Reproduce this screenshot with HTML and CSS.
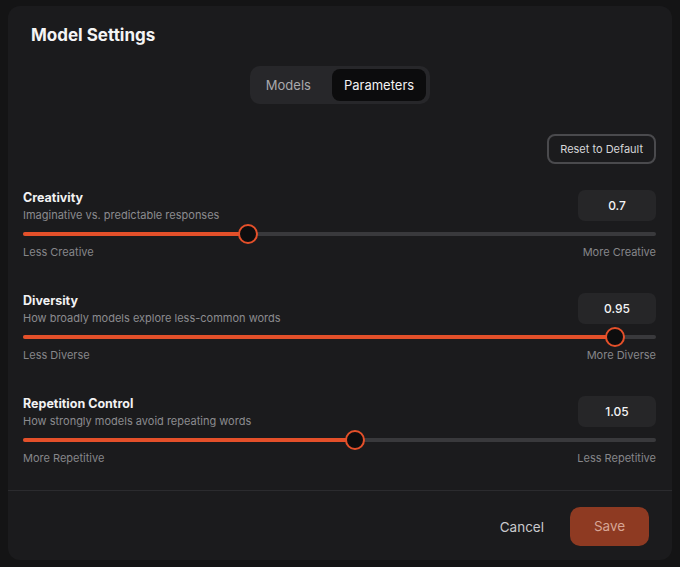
FILE: index.html
```html
<!DOCTYPE html>
<html lang="en">
<head>
    <meta charset="UTF-8">
    <meta name="viewport" content="width=device-width, initial-scale=1.0">
    <title>Model Settings</title>

    <link rel="stylesheet" href="styles.css">
</head>
<body>
    <div class="dialog">
        <h2 class="dialog-title">Model Settings</h2>

        <div class="tabs">
            <a href="#models" class="tab">Models</a>
            <a href="#parameters" class="tab active">Parameters</a>
        </div>

        <div class="params">
            <div class="reset-row">
                <a href="#reset" class="btn-reset">Reset to Default</a>
            </div>

            <div class="param">
                <div class="param-head">
                    <div>
                        <div class="param-name">Creativity</div>
                        <div class="param-desc">Imaginative vs. predictable responses</div>
                    </div>
                    <div class="param-value">0.7</div>
                </div>
                <div class="slider" style="--p: 0.35">
                    <div class="slider-fill"></div>
                    <div class="slider-thumb"></div>
                </div>
                <div class="slider-labels">
                    <span>Less Creative</span>
                    <span>More Creative</span>
                </div>
            </div>

            <div class="param">
                <div class="param-head">
                    <div>
                        <div class="param-name">Diversity</div>
                        <div class="param-desc">How broadly models explore less-common words</div>
                    </div>
                    <div class="param-value">0.95</div>
                </div>
                <div class="slider" style="--p: 0.95">
                    <div class="slider-fill"></div>
                    <div class="slider-thumb"></div>
                </div>
                <div class="slider-labels">
                    <span>Less Diverse</span>
                    <span>More Diverse</span>
                </div>
            </div>

            <div class="param">
                <div class="param-head">
                    <div>
                        <div class="param-name">Repetition Control</div>
                        <div class="param-desc">How strongly models avoid repeating words</div>
                    </div>
                    <div class="param-value">1.05</div>
                </div>
                <div class="slider" style="--p: 0.525">
                    <div class="slider-fill"></div>
                    <div class="slider-thumb"></div>
                </div>
                <div class="slider-labels">
                    <span>More Repetitive</span>
                    <span>Less Repetitive</span>
                </div>
            </div>
        </div>

        <div class="dialog-footer">
            <a href="#cancel" class="btn-cancel">Cancel</a>
            <a href="#save" class="btn-save">Save</a>
        </div>
    </div>
</body>
</html>
```

FILE: styles.css
```css
*{
    box-sizing: border-box;
}
body{
    margin: 0;
    height: 567px;
    overflow: hidden;
    background-color: #141415;
    font-family: "Inter", "Lato", sans-serif;
    color: #ededee;
}
a{
    text-decoration: none;
}

.dialog{
    width: 664px;
    height: 554px;
    margin: 6px 0 0 8px;
    background-color: #1b1b1d;
    border-radius: 12px;
    display: flex;
    flex-direction: column;
}
.dialog-title{
    margin: 0;
    padding: 19px 23px 0 23px;
    font-size: 17px;
    line-height: 20px;
    font-weight: 700;
    color: #f4f4f5;
}

.tabs{
    align-self: center;
    display: flex;
    gap: 6px;
    margin-top: 21px;
    padding: 3px 4px 3px 3px;
    height: 38px;
    background-color: #27272a;
    border-radius: 10px;
}
.tab{
    display: flex;
    align-items: center;
    padding: 0 15px 0 13px;
    font-size: 13px;
    color: #a9a9ad;
    border-radius: 8px;
}
.tab.active{
    background-color: #0c0c0d;
    color: #f2f2f3;
    padding: 0 12px;
}

.params{
    padding: 0 16px 0 15px;
}
.reset-row{
    display: flex;
    justify-content: flex-end;
    margin-top: 30px;
}
.btn-reset{
    display: inline-block;
    height: 30px;
    line-height: 26px;
    padding: 0 11px;
    border: 2px solid #4a4a4d;
    border-radius: 8px;
    font-size: 11px;
    color: #d6d6d8;
}

.param{
    margin-top: 26px;
}
.param + .param{
    margin-top: 34px;
}
.param-head{
    display: flex;
    justify-content: space-between;
    align-items: flex-start;
}
.param-name{
    font-size: 12.5px;
    font-weight: 700;
    line-height: 16px;
    color: #f2f2f3;
}
.param-desc{
    font-size: 11px;
    line-height: 15px;
    margin-top: 2px;
    color: #8b8b8f;
}
.param-value{
    width: 78px;
    height: 31px;
    line-height: 31px;
    text-align: center;
    background-color: #262628;
    border-radius: 7px;
    font-size: 12px;
    font-weight: 500;
    color: #f4f4f5;
}

/* track with filled part and round thumb, --p is the value share 0..1 */
.slider{
    position: relative;
    height: 20px;
    margin-top: 1px;
}
.slider::before{
    content: "";
    position: absolute;
    left: 0;
    right: 0;
    top: 8px;
    height: 4px;
    border-radius: 2px;
    background-color: #39393c;
}
.slider-fill{
    position: absolute;
    left: 0;
    top: 8px;
    height: 4px;
    border-radius: 2px;
    width: calc(10px + var(--p) * (100% - 20px));
    background-color: #e4502a;
}
.slider-thumb{
    position: absolute;
    top: 0;
    left: calc(var(--p) * (100% - 20px));
    width: 20px;
    height: 20px;
    border-radius: 50%;
    border: 2px solid #e4502a;
    background-color: #0d0d0e;
}
.slider-labels{
    display: flex;
    justify-content: space-between;
    font-size: 11px;
    line-height: 14px;
    margin-top: 1px;
    color: #86868a;
}

.dialog-footer{
    margin-top: auto;
    border-top: 1px solid #2b2b2e;
    display: flex;
    justify-content: flex-end;
    align-items: center;
    gap: 6px;
    padding: 16px 23px 14px 23px;
}
.btn-cancel{
    padding: 0 20px;
    font-size: 13.5px;
    color: #c9c9cc;
}
.btn-save{
    width: 79px;
    height: 39px;
    line-height: 39px;
    text-align: center;
    background-color: #8e3a22;
    border-radius: 10px;
    font-size: 13.5px;
    color: #d7a595;
}
```
